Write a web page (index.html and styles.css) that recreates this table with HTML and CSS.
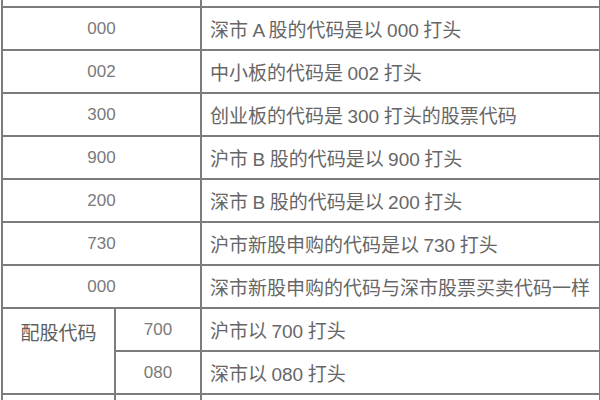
FILE: index.html
```html
<!DOCTYPE html>
<html lang="zh-CN">
<head>
<meta charset="utf-8">
<title>股票代码</title>
<link rel="stylesheet" href="styles.css">
</head>
<body>
<div class="viewport">
  <table class="codes">
    <colgroup>
      <col class="c1">
      <col class="c2">
      <col class="c3">
    </colgroup>
    <tr>
      <td colspan="2" class="code"></td>
      <td class="desc"></td>
    </tr>
    <tr>
      <td colspan="2" class="code">000</td>
      <td class="desc">深市 A 股的代码是以 000 打头</td>
    </tr>
    <tr>
      <td colspan="2" class="code">002</td>
      <td class="desc">中小板的代码是 002 打头</td>
    </tr>
    <tr>
      <td colspan="2" class="code">300</td>
      <td class="desc">创业板的代码是 300 打头的股票代码</td>
    </tr>
    <tr>
      <td colspan="2" class="code">900</td>
      <td class="desc">沪市 B 股的代码是以 900 打头</td>
    </tr>
    <tr>
      <td colspan="2" class="code">200</td>
      <td class="desc">深市 B 股的代码是以 200 打头</td>
    </tr>
    <tr>
      <td colspan="2" class="code">730</td>
      <td class="desc">沪市新股申购的代码是以 730 打头</td>
    </tr>
    <tr>
      <td colspan="2" class="code">000</td>
      <td class="desc">深市新股申购的代码与深市股票买卖代码一样</td>
    </tr>
    <tr>
      <td rowspan="2" class="group">配股代码</td>
      <td class="code">700</td>
      <td class="desc">沪市以 700 打头</td>
    </tr>
    <tr>
      <td class="code">080</td>
      <td class="desc">深市以 080 打头</td>
    </tr>
    <tr>
      <td class="group"></td>
      <td class="code"></td>
      <td class="desc"></td>
    </tr>
  </table>
</div>
</body>
</html>
```

FILE: styles.css
```css
html, body {
  margin: 0;
  padding: 0;
  background: #ffffff;
}

.viewport {
  width: 600px;
  height: 400px;
  overflow: hidden;
}

.codes {
  border-collapse: collapse;
  table-layout: fixed;
  width: 598px;
  margin: -37px 0 0 1px;
  font-family: "Liberation Sans", "Noto Sans CJK SC", sans-serif;
  font-size: 18px;
  color: #666666;
}

.c1 { width: 113px; }
.c2 { width: 86px; }
.c3 { width: 399px; }

.codes tr {
  height: 43px;
}

.codes td {
  border: 2px solid #7c7c7c;
  padding: 0;
  white-space: nowrap;
  overflow: hidden;
}

.code {
  text-align: center;
  font-size: 17px;
  color: #7a7a7a;
}

.desc {
  padding-left: 8px !important;
  text-align: left;
  font-size: 19px;
  word-spacing: -0.8px;
}

.group {
  text-align: center;
  vertical-align: top;
  padding-top: 9px !important;
  font-size: 19px;
  color: #5e5e5e;
}
```
